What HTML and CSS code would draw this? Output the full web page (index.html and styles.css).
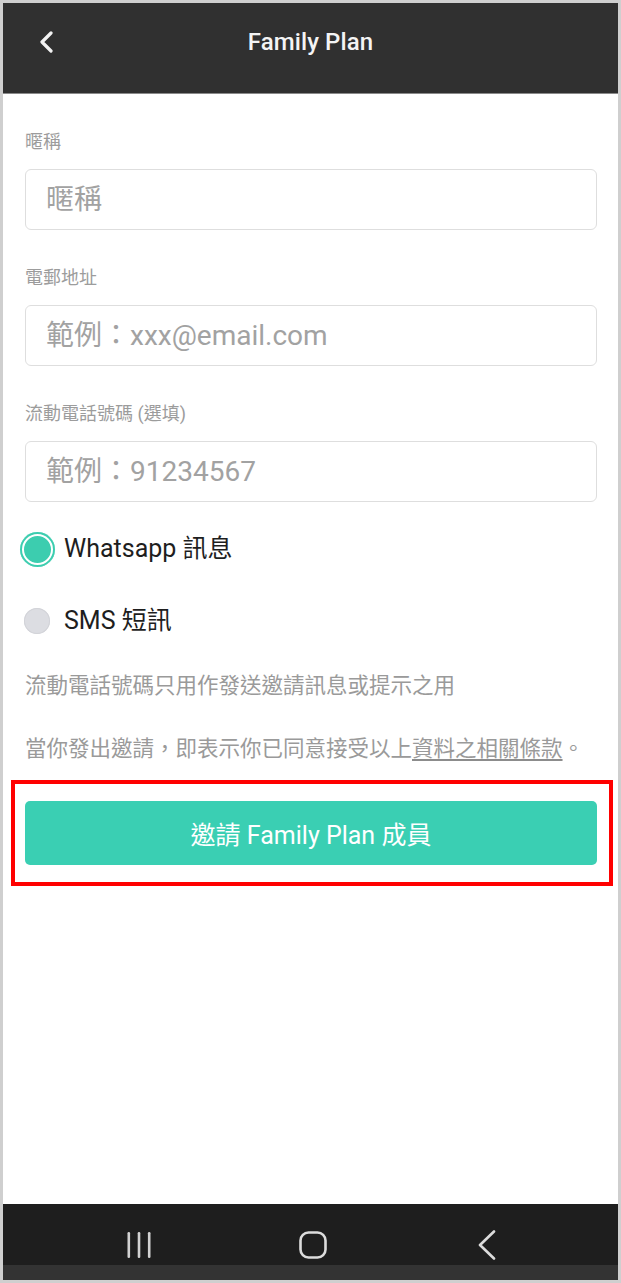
FILE: index.html
```html
<!DOCTYPE html>
<html lang="zh-Hant">
<head>
<meta charset="utf-8">
<title>Family Plan</title>
<link rel="stylesheet" href="styles.css">
</head>
<body>
<div class="frame">
  <header class="appbar">
    <div class="appbar-row">
      <button class="back" aria-label="返回">
        <svg width="16" height="22" viewBox="0 0 16 22"><polyline points="12,2 3,11 12,20" fill="none" stroke="#f2f2f2" stroke-width="3.2" stroke-linecap="round" stroke-linejoin="round"/></svg>
      </button>
      <h1 class="title">Family Plan</h1>
      <span class="spacer"></span>
    </div>
  </header>

  <main class="form">
    <div class="field">
      <label class="label" for="nick">暱稱</label>
      <input class="input" id="nick" type="text" placeholder="暱稱">
    </div>
    <div class="field">
      <label class="label" for="email">電郵地址</label>
      <input class="input" id="email" type="text" placeholder="範例：xxx@email.com">
    </div>
    <div class="field">
      <label class="label" for="phone">流動電話號碼 (選填)</label>
      <input class="input" id="phone" type="text" placeholder="範例：91234567">
    </div>

    <div class="radio-row first">
      <span class="radio-slot"><span class="radio checked"></span></span>
      <span class="radio-text">Whatsapp 訊息</span>
    </div>
    <div class="radio-row">
      <span class="radio-slot"><span class="radio"></span></span>
      <span class="radio-text">SMS 短訊</span>
    </div>

    <p class="note first-note">流動電話號碼只用作發送邀請訊息或提示之用</p>
    <p class="note">當你發出邀請，即表示你已同意接受以上<span class="link">資料之相關條款</span>。</p>

    <div class="highlight">
      <button class="cta">邀請 Family Plan 成員</button>
    </div>
  </main>

  <nav class="sysnav">
    <span class="navslot">
      <svg width="24" height="26" viewBox="0 0 24 26"><rect x="0.5" y="0" width="2.6" height="26" rx="1.2" fill="#d2d2d2"/><rect x="10.7" y="0" width="2.6" height="26" rx="1.2" fill="#d2d2d2"/><rect x="20.9" y="0" width="2.6" height="26" rx="1.2" fill="#d2d2d2"/></svg>
    </span>
    <span class="navslot">
      <svg width="28" height="28" viewBox="0 0 28 28"><rect x="1.5" y="1.5" width="25" height="25" rx="8" fill="none" stroke="#dcdcdc" stroke-width="2.6"/></svg>
    </span>
    <span class="navslot">
      <svg width="18" height="30" viewBox="0 0 18 30"><polyline points="16,1.5 2,15 16,28.5" fill="none" stroke="#dcdcdc" stroke-width="2.6" stroke-linecap="round" stroke-linejoin="round"/></svg>
    </span>
  </nav>
  <div class="strip"></div>
</div>
</body>
</html>
```

FILE: styles.css
```css
* { box-sizing: border-box; }

html, body {
  margin: 0;
  padding: 0;
}

body {
  background: #cfcfcf;
  font-family: Roboto, "Noto Sans CJK TC", "Noto Sans", sans-serif;
}

.frame {
  margin: 3px;
  width: 615px;
  height: 1277px;
  background: #ffffff;
  display: flex;
  flex-direction: column;
}

/* App bar */
.appbar {
  height: 91px;
  background: #303030;
  border-bottom: 1px solid #8a8a8a;
  padding-bottom: 12px;
}

.appbar-row {
  height: 78px;
  display: grid;
  grid-template-columns: 1fr auto 1fr;
  align-items: center;
}

.back {
  justify-self: start;
  margin-left: 36px;
  padding: 0;
  border: 0;
  background: transparent;
  display: flex;
  align-items: center;
}

.title {
  margin: 0;
  font-family: Roboto, "Noto Sans CJK TC", sans-serif;
  font-weight: 500;
  font-size: 24px;
  color: #f4f4f4;
  letter-spacing: 0.1px;
}

/* Form */
.form {
  flex: 1;
  padding: 0 21px 0 22px;
}

.field {
  margin-top: 36px;
}

.label {
  display: block;
  font-size: 18px;
  line-height: 24px;
  color: #9c9c9c;
  margin-bottom: 15px;
}

.input {
  display: block;
  width: 100%;
  height: 61px;
  border: 1.5px solid #dedede;
  border-radius: 6px;
  padding: 0 0 0 20px;
  font-family: Roboto, "Noto Sans CJK TC", sans-serif;
  font-size: 28px;
  color: #333;
  background: #fff;
  outline: none;
}

.input::placeholder {
  color: #a2a2a2;
  opacity: 1;
}

.radio-row {
  display: flex;
  align-items: center;
  height: 36px;
  margin-top: 36px;
  margin-left: -6px;
}

.radio-row.first {
  margin-top: 29px;
}

.radio-slot {
  width: 36px;
  height: 36px;
  display: flex;
  align-items: center;
  justify-content: center;
  margin-right: 9px;
}

.radio {
  width: 26px;
  height: 26px;
  border-radius: 50%;
  background: #dcdde2;
  box-shadow: inset 0 0 0 1px #d2d3d8;
}

.radio.checked {
  width: 35px;
  height: 35px;
  background: #3ccdaf;
  box-shadow: inset 0 0 0 2px #3ccdaf, inset 0 0 0 4px #ffffff;
}

.radio-text {
  font-size: 25px;
  color: #1e1e1e;
  line-height: 36px;
}

.note {
  margin: 33px 0 0;
  font-size: 21.5px;
  line-height: 30px;
  color: #9a9a9a;
  white-space: nowrap;
}

.note.first-note {
  margin-top: 32px;
}

.link {
  text-decoration: underline;
  text-decoration-color: #8c8c8c;
  text-underline-offset: 3px;
  text-decoration-thickness: 1.5px;
}

.highlight {
  margin: 16px -16px 0 -14px;
  border: 4px solid #ff0000;
  padding: 17px 12px 17px 10px;
}

.cta {
  display: block;
  width: 100%;
  height: 64px;
  border: 0;
  border-radius: 5px;
  background: #3acfb3;
  color: #ffffff;
  font-family: Roboto, "Noto Sans CJK TC", sans-serif;
  font-size: 25px;
  font-weight: 400;
}

/* System navigation */
.sysnav {
  height: 61px;
  background: #1e1e1e;
  display: flex;
  justify-content: center;
  align-items: center;
  gap: 134px;
  padding: 21px 0 0 4px;
}

.navslot {
  width: 40px;
  height: 40px;
  display: flex;
  align-items: center;
  justify-content: center;
}

.strip {
  height: 15px;
  background: #333333;
}
```
